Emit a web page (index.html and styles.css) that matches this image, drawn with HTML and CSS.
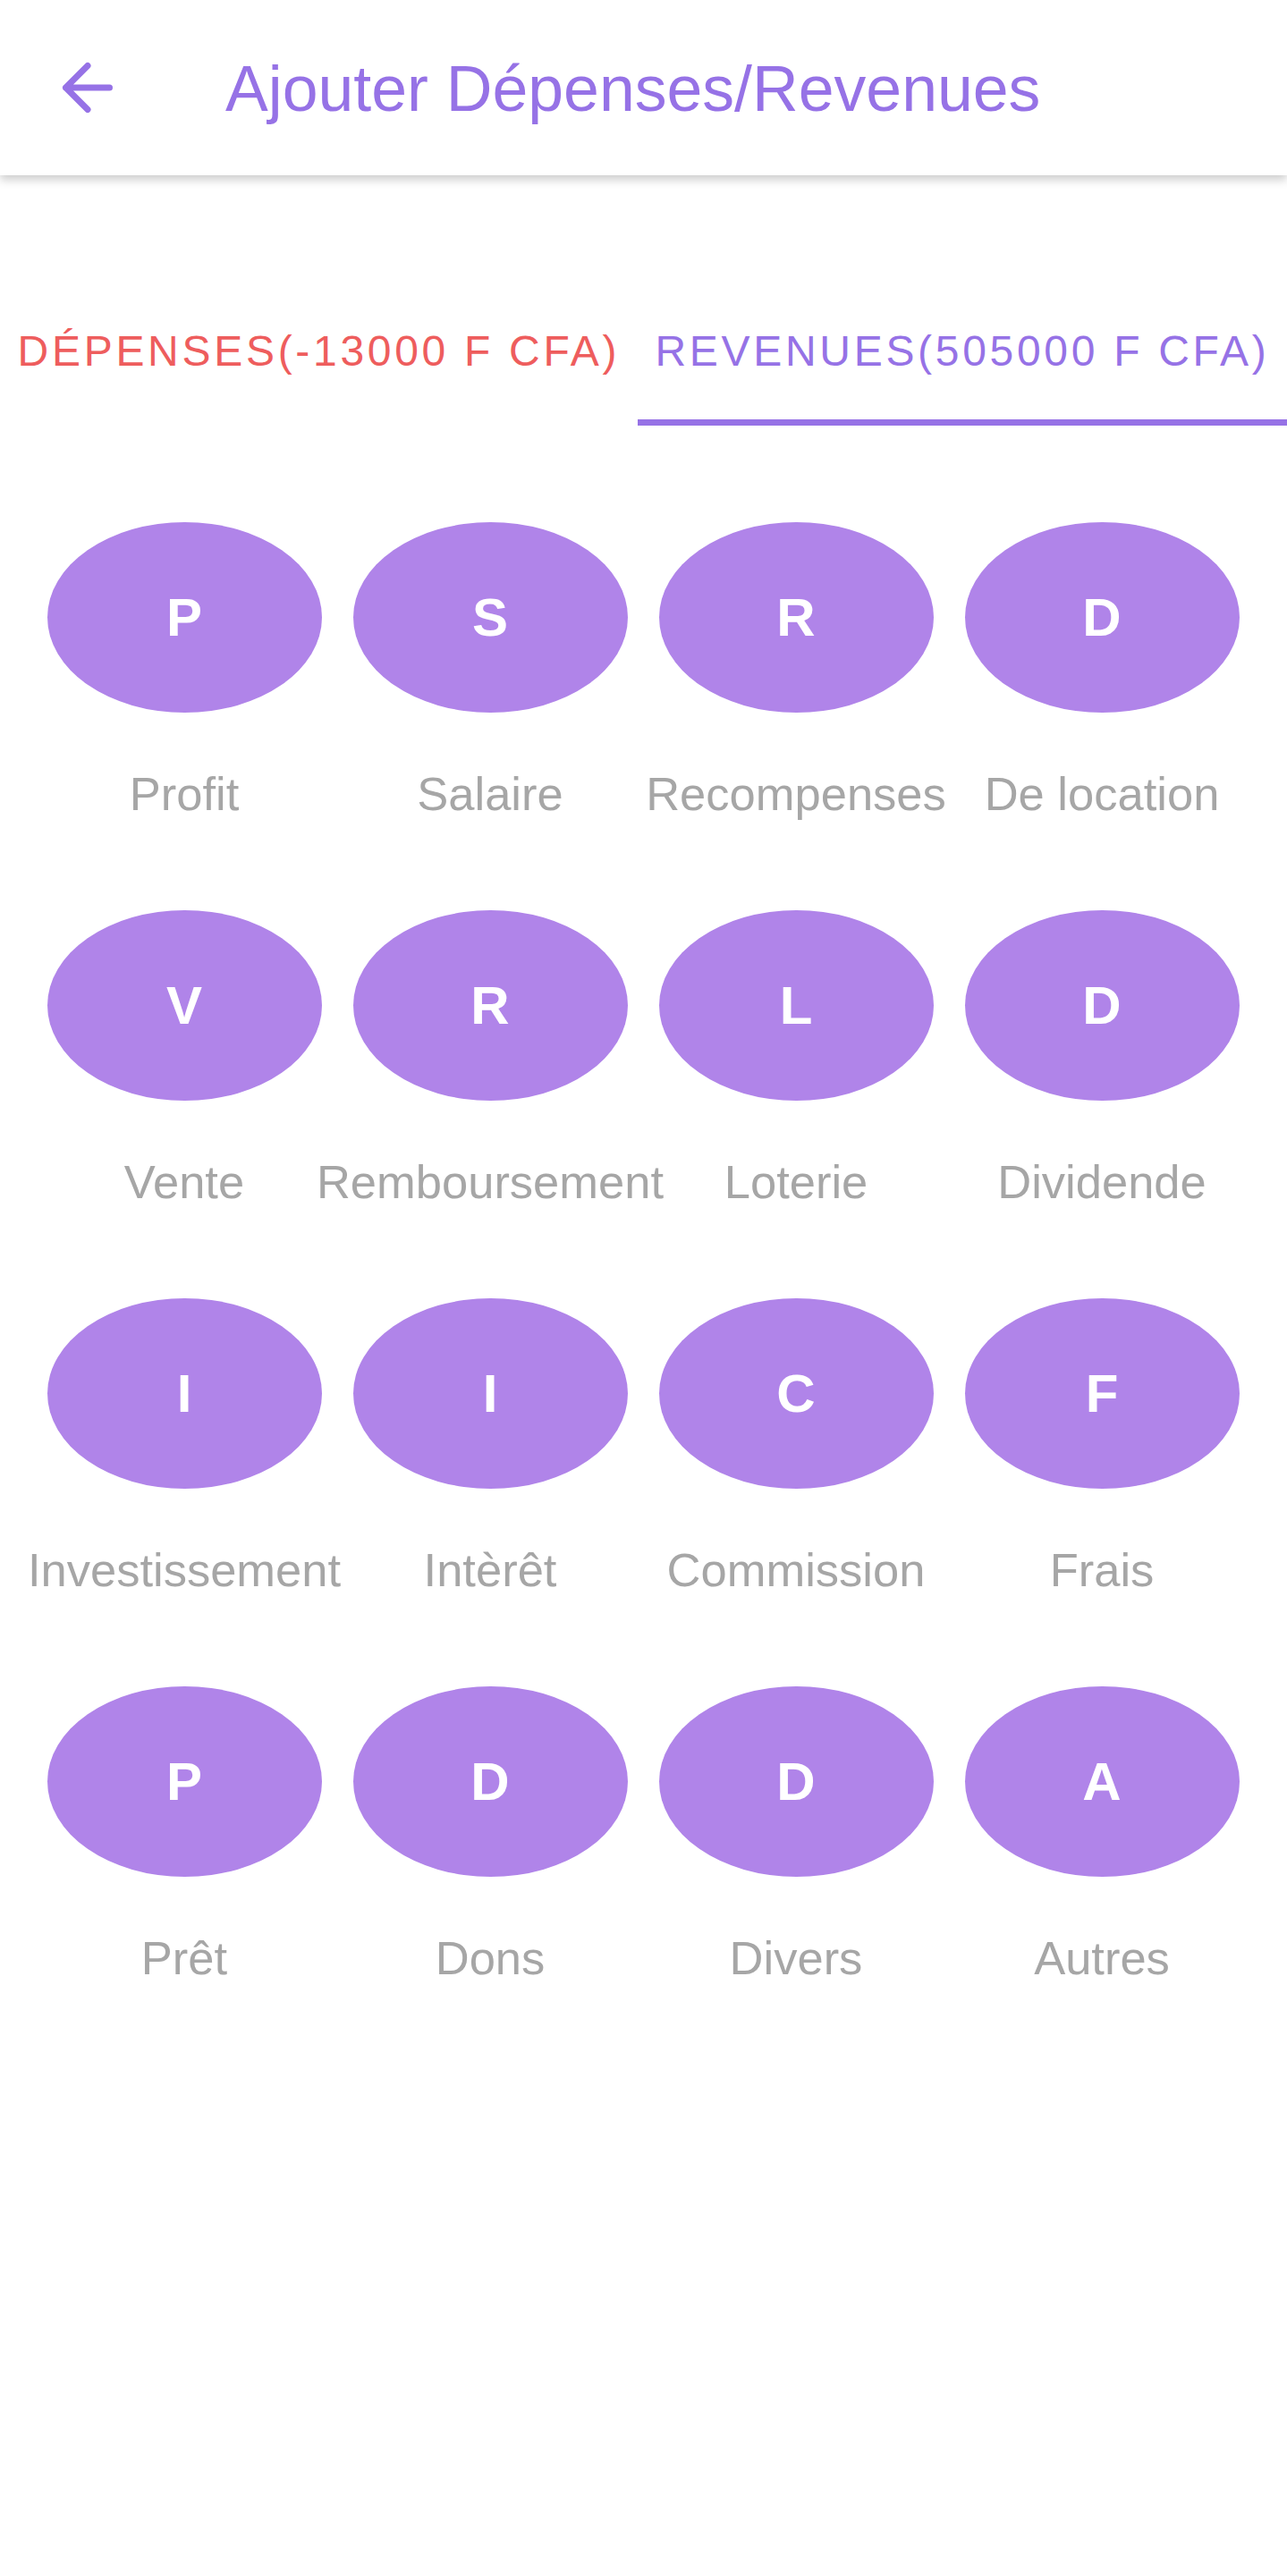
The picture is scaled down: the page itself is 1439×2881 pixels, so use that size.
FILE: index.html
```html
<!DOCTYPE html>
<html lang="fr">
<head>
  <meta charset="UTF-8">
  <title>Ajouter Dépenses/Revenues</title>
  <link rel="stylesheet" href="styles.css">
</head>
<body>
  <header class="topbar">
    <button class="back-btn" aria-label="Retour">
      <svg viewBox="0 0 24 24" width="84" height="84">
        <path d="M19 12H5M12 5l-7 7 7 7" fill="none" stroke="currentColor" stroke-width="2" stroke-linecap="round" stroke-linejoin="round"/>
      </svg>
    </button>
    <h1 class="title">Ajouter Dépenses/Revenues</h1>
  </header>

  <nav class="tabs">
    <div class="tab expense">DÉPENSES(-13000 F CFA)</div>
    <div class="tab income active">REVENUES(505000 F CFA)</div>
  </nav>

  <div class="grid">
    <div class="cat"><div class="bubble">P</div><div class="label">Profit</div></div>
    <div class="cat"><div class="bubble">S</div><div class="label">Salaire</div></div>
    <div class="cat"><div class="bubble">R</div><div class="label">Recompenses</div></div>
    <div class="cat"><div class="bubble">D</div><div class="label">De location</div></div>

    <div class="cat"><div class="bubble">V</div><div class="label">Vente</div></div>
    <div class="cat"><div class="bubble">R</div><div class="label">Remboursement</div></div>
    <div class="cat"><div class="bubble">L</div><div class="label">Loterie</div></div>
    <div class="cat"><div class="bubble">D</div><div class="label">Dividende</div></div>

    <div class="cat"><div class="bubble">I</div><div class="label">Investissement</div></div>
    <div class="cat"><div class="bubble">I</div><div class="label">Intèrêt</div></div>
    <div class="cat"><div class="bubble">C</div><div class="label">Commission</div></div>
    <div class="cat"><div class="bubble">F</div><div class="label">Frais</div></div>

    <div class="cat"><div class="bubble">P</div><div class="label">Prêt</div></div>
    <div class="cat"><div class="bubble">D</div><div class="label">Dons</div></div>
    <div class="cat"><div class="bubble">D</div><div class="label">Divers</div></div>
    <div class="cat"><div class="bubble">A</div><div class="label">Autres</div></div>
  </div>
</body>
</html>
```

FILE: styles.css
```css
body {
  margin: 0;
  font-family: "Liberation Sans", Arial, sans-serif;
  background: #fff;
  color: #222;
}
.topbar {
  height: 196px;
  display: flex;
  align-items: center;
  background: #fff;
  box-shadow: 0 5px 10px rgba(0, 0, 0, 0.2);
  position: relative;
}
.back-btn {
  margin-left: 56px;
  padding: 0;
  width: 84px;
  height: 84px;
  border: none;
  background: transparent;
  color: #9672e6;
  display: flex;
}
.title {
  margin: 0 0 0 112px;
  font-size: 71.6px;
  font-weight: normal;
  color: #9672e6;
  line-height: 80px;
  padding-top: 2px;
}
.tabs {
  display: flex;
  margin-top: 112px;
}
.tab {
  flex: 1 1 auto;
  height: 168px;
  box-sizing: border-box;
  padding-top: 57px;
  text-align: center;
  font-size: 48px;
  line-height: 56px;
  letter-spacing: 3.7px;
  border-bottom: 7px solid transparent;
  white-space: nowrap;
}
.tab.expense {
  color: #ee5d5d;
}
.tab.income {
  color: #9672e6;
}
.tab.active {
  border-bottom-color: #9672e6;
}
.grid {
  display: grid;
  grid-template-columns: repeat(4, 342px);
  row-gap: 102px;
  padding: 108px 35px 0;
}
.cat {
  display: flex;
  flex-direction: column;
  align-items: center;
}
.bubble {
  width: 307px;
  height: 213px;
  border-radius: 50%;
  background: #b084e9;
  color: #fff;
  font-weight: bold;
  font-size: 60px;
  display: flex;
  align-items: center;
  justify-content: center;
}
.label {
  margin-top: 63px;
  font-size: 52.5px;
  line-height: 56px;
  color: #a6a6a6;
  white-space: nowrap;
}
```
